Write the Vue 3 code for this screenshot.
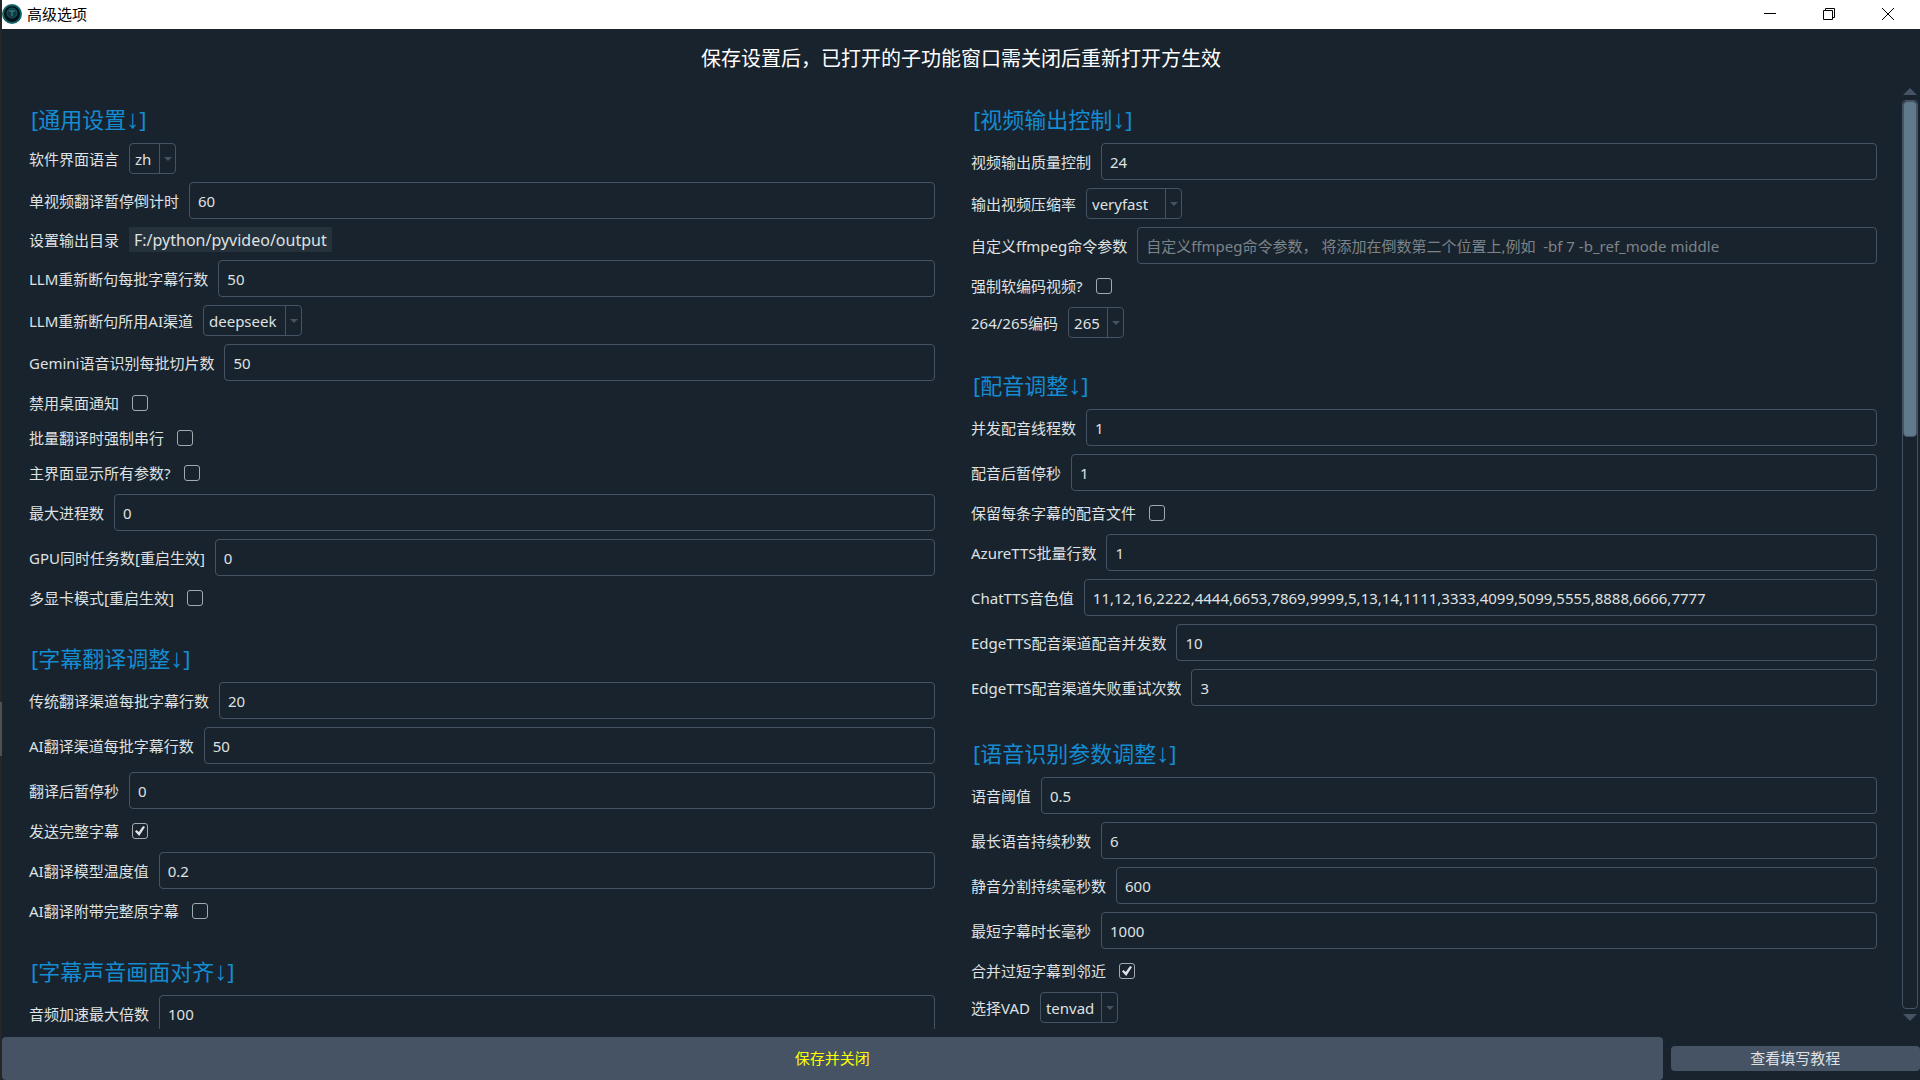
<!-- 高级选项 -->
<template>
  <div class="screen">
    <div class="edge"></div>
    <div class="window">
      <header class="title-bar">
        <svg class="logo" width="20" height="20" viewBox="0 0 20 20">
          <circle cx="10" cy="10" r="9" fill="#04141a" stroke="#14666c" stroke-width="2" />
          <circle cx="10" cy="9" r="5" fill="#0d3b43" stroke="#1d5a62" />
          <path d="M7 7h6M10 7v5" stroke="#4b8d92" fill="none" />
        </svg>
        <h1 class="title">高级选项</h1>
        <div class="win-btns">
          <button type="button" class="win-btn" aria-label="最小化">
            <svg width="12" height="12" viewBox="0 0 12 12"><path d="M0 5.5h12" /></svg>
          </button>
          <button type="button" class="win-btn" aria-label="还原">
            <svg width="12" height="12" viewBox="0 0 12 12">
              <path d="M.5 2.5h9v9h-9zM2.5 2.5v-2h9v9h-2" />
            </svg>
          </button>
          <button type="button" class="win-btn" aria-label="关闭">
            <svg width="12" height="12" viewBox="0 0 12 12"><path d="M0 0l12 12M12 0L0 12" /></svg>
          </button>
        </div>
      </header>

      <p class="tips">保存设置后，已打开的子功能窗口需关闭后重新打开方生效</p>

      <div class="body">
        <form class="columns" @submit.prevent>
          <div v-for="(groups, i) in columns" :key="i" class="column">
            <section v-for="group in groups" :key="group.title" class="group">
              <h2 class="group-title">[{{ group.title }}<span class="down">↓</span>]</h2>
              <div v-for="item in group.items" :key="item.key" class="row">
                <label class="label" :for="item.key">{{ item.label }}</label>
                <input
                  v-if="item.type === 'check'"
                  :id="item.key"
                  v-model="item.value"
                  type="checkbox"
                  class="check"
                />
                <span v-else-if="item.type === 'select'" class="select-box">
                  <select
                    :id="item.key"
                    v-model="item.value"
                    class="select"
                    :style="{ width: item.width + 'px' }"
                  >
                    <option v-for="opt in item.options" :key="opt" :value="opt">{{ opt }}</option>
                  </select>
                  <span class="select-arrow">
                    <svg width="8" height="4" viewBox="0 0 8 4"><path d="M0 0h8L4 4z" /></svg>
                  </span>
                </span>
                <button v-else-if="item.type === 'dir'" :id="item.key" type="button" class="dir-btn">
                  {{ item.value }}
                </button>
                <input
                  v-else
                  :id="item.key"
                  v-model="item.value"
                  type="text"
                  class="text"
                  :placeholder="item.placeholder"
                />
              </div>
            </section>
          </div>
        </form>

        <div class="scrollbar">
          <svg width="14" height="7" viewBox="0 0 14 7"><path d="M7 0l7 7H0z" /></svg>
          <div class="track"><div class="thumb"></div></div>
          <svg width="14" height="7" viewBox="0 0 14 7"><path d="M0 0h14L7 7z" /></svg>
        </div>
      </div>

      <footer class="footer">
        <button type="button" class="save-btn">保存并关闭</button>
        <button type="button" class="help-btn">查看填写教程</button>
      </footer>
    </div>
  </div>
</template>

<script setup>
import { reactive } from 'vue'

// 左右两列的设置项
const columns = reactive([
  [
    {
      title: '通用设置',
      items: [
        { key: 'lang', label: '软件界面语言', type: 'select', value: 'zh', options: ['zh', 'en'], width: 47 },
        { key: 'countdown_sec', label: '单视频翻译暂停倒计时', value: '60' },
        { key: 'homedir', label: '设置输出目录', type: 'dir', value: 'F:/python/pyvideo/output' },
        { key: 'llm_chunk_size', label: 'LLM重新断句每批字幕行数', value: '50' },
        {
          key: 'llm_ai_type',
          label: 'LLM重新断句所用AI渠道',
          type: 'select',
          value: 'deepseek',
          options: ['openai', 'deepseek'],
          width: 99,
        },
        { key: 'gemini_recogn_chunk', label: 'Gemini语音识别每批切片数', value: '50' },
        { key: 'dont_notify', label: '禁用桌面通知', type: 'check', value: false },
        { key: 'batch_single', label: '批量翻译时强制串行', type: 'check', value: false },
        { key: 'show_more', label: '主界面显示所有参数?', type: 'check', value: false },
        { key: 'process_max', label: '最大进程数', value: '0' },
        { key: 'process_max_gpu', label: 'GPU同时任务数[重启生效]', value: '0' },
        { key: 'multi_gpus', label: '多显卡模式[重启生效]', type: 'check', value: false },
      ],
    },
    {
      title: '字幕翻译调整',
      items: [
        { key: 'trans_thread', label: '传统翻译渠道每批字幕行数', value: '20' },
        { key: 'aitrans_thread', label: 'AI翻译渠道每批字幕行数', value: '50' },
        { key: 'translation_wait', label: '翻译后暂停秒', value: '0' },
        { key: 'aisendsrt', label: '发送完整字幕', type: 'check', value: true },
        { key: 'aitrans_temperature', label: 'AI翻译模型温度值', value: '0.2' },
        { key: 'aitrans_context', label: 'AI翻译附带完整原字幕', type: 'check', value: false },
      ],
    },
    {
      title: '字幕声音画面对齐',
      items: [{ key: 'max_audio_speed_rate', label: '音频加速最大倍数', value: '100' }],
    },
  ],
  [
    {
      title: '视频输出控制',
      items: [
        { key: 'crf', label: '视频输出质量控制', value: '24' },
        {
          key: 'preset',
          label: '输出视频压缩率',
          type: 'select',
          value: 'veryfast',
          options: ['ultrafast', 'veryfast', 'medium', 'slow'],
          width: 96,
        },
        {
          key: 'ffmpeg_cmd',
          label: '自定义ffmpeg命令参数',
          value: '',
          placeholder: '自定义ffmpeg命令参数， 将添加在倒数第二个位置上,例如  -bf 7 -b_ref_mode middle',
        },
        { key: 'force_lib', label: '强制软编码视频?', type: 'check', value: false },
        {
          key: 'video_codec',
          label: '264/265编码',
          type: 'select',
          value: '265',
          options: ['264', '265'],
          width: 56,
        },
      ],
    },
    {
      title: '配音调整',
      items: [
        { key: 'dubbing_thread', label: '并发配音线程数', value: '1' },
        { key: 'dubbing_wait', label: '配音后暂停秒', value: '1' },
        { key: 'save_segment_audio', label: '保留每条字幕的配音文件', type: 'check', value: false },
        { key: 'azure_lines', label: 'AzureTTS批量行数', value: '1' },
        {
          key: 'chattts_voice',
          label: 'ChatTTS音色值',
          value: '11,12,16,2222,4444,6653,7869,9999,5,13,14,1111,3333,4099,5099,5555,8888,6666,7777',
        },
        { key: 'edgetts_max_concurrent', label: 'EdgeTTS配音渠道配音并发数', value: '10' },
        { key: 'edgetts_retry_nums', label: 'EdgeTTS配音渠道失败重试次数', value: '3' },
      ],
    },
    {
      title: '语音识别参数调整',
      items: [
        { key: 'threshold', label: '语音阈值', value: '0.5' },
        { key: 'max_speech_duration_s', label: '最长语音持续秒数', value: '6' },
        { key: 'min_silence_duration_ms', label: '静音分割持续毫秒数', value: '600' },
        { key: 'min_speech_duration_ms', label: '最短字幕时长毫秒', value: '1000' },
        { key: 'merge_short_sub', label: '合并过短字幕到邻近', type: 'check', value: true },
        {
          key: 'vad_type',
          label: '选择VAD',
          type: 'select',
          value: 'tenvad',
          options: ['tenvad', 'silero'],
          width: 78,
        },
      ],
    },
  ],
])
</script>

<style>
body {
  background: #19232d;
}
</style>

<style scoped>
.screen {
  display: flex;
  height: 100vh;
  background: #19232d;
  color: #dfe1e2;
  font-family: 'Noto Sans', 'Noto Sans CJK SC', sans-serif;
  font-size: 15px;
  line-height: 20px;
}

button,
input,
select {
  box-sizing: border-box;
  margin: 0;
  font: inherit;
  color: inherit;
}

/* 窗口左侧露出的桌面 */
.edge {
  width: 2px;
  background: linear-gradient(#262626 65%, #505050 65%, #505050 70%, #262626 70%);
}

.window {
  flex: 1;
  min-width: 0;
  display: flex;
  flex-direction: column;
}

.title-bar {
  box-sizing: border-box;
  display: flex;
  align-items: center;
  height: 29px;
  padding-bottom: 1px;
  background: #fff;
  color: #000;
}

.title {
  flex: 1;
  margin: 0 0 0 5px;
  font-size: 15px;
  font-weight: 400;
}

.win-btns {
  display: flex;
  align-self: stretch;
  padding-right: 3px;
}

.win-btn {
  display: flex;
  align-items: center;
  justify-content: center;
  width: 59px;
  padding: 0;
  border: none;
  background: none;
}

.win-btn path {
  fill: none;
  stroke: #000;
}

.tips {
  margin: 0;
  font-size: 20px;
  line-height: 59px;
  text-align: center;
  color: #fff;
}

.body {
  flex: 1;
  min-height: 0;
  display: flex;
  padding-bottom: 8px;
}

.columns {
  flex: 1;
  display: grid;
  grid-template-columns: 1fr 1fr;
  align-items: start;
  gap: 36px;
  padding: 16px 25px 0 27px;
  overflow-y: auto;
  scrollbar-width: none;
}

.column {
  display: flex;
  flex-direction: column;
  gap: 32px;
  min-width: 0;
}

.group {
  display: flex;
  flex-direction: column;
  gap: 8px;
}

.group-title {
  margin: 0;
  padding-left: 2px;
  font-size: 22px;
  font-weight: 400;
  line-height: 31px;
  color: #148cd2;
}

.down {
  font-family: 'Liberation Sans', sans-serif;
  font-size: 26px;
  line-height: 1px;
}

.row {
  display: flex;
  align-items: center;
  gap: 10px;
  min-height: 25px;
}

.label {
  white-space: nowrap;
}

.text {
  flex: 1;
  min-width: 0;
  height: 37px;
  padding: 0 8px;
  border: 1px solid #455364;
  border-radius: 4px;
  background: transparent;
  outline: none;
}

.text::placeholder {
  color: #7c8389;
  opacity: 1;
}

.check {
  appearance: none;
  display: grid;
  place-content: center;
  width: 16px;
  height: 16px;
  margin: 6px 3px 5px;
  border: 1px solid #a4a9ad;
  border-radius: 3px;
}

.check:checked::before {
  content: '';
  width: 10px;
  height: 10px;
  background: #dfe1e2;
  clip-path: polygon(0 55%, 15% 40%, 38% 60%, 80% 0, 100% 10%, 42% 100%);
}

.select-box {
  display: grid;
}

.select {
  grid-area: 1 / 1;
  appearance: none;
  height: 31px;
  padding: 0 17px 0 5px;
  border: 1px solid #455364;
  border-radius: 4px;
  background: transparent;
}

.select option {
  background: #19232d;
}

.select-arrow {
  grid-area: 1 / 1;
  justify-self: end;
  display: flex;
  align-items: center;
  justify-content: center;
  width: 16px;
  border-left: 1px solid #455364;
  pointer-events: none;
}

.select-arrow path,
.scrollbar path {
  fill: #455364;
}

.dir-btn {
  height: 25px;
  padding: 0 5px;
  border: none;
  background: #25323b;
  font-size: 16px;
}

.scrollbar {
  display: flex;
  flex-direction: column;
  align-items: center;
  gap: 5px;
  width: 16px;
  padding-bottom: 8px;
  margin-right: 2px;
}

.track {
  flex: 1;
  box-sizing: border-box;
  width: 16px;
  border: 1px solid #455364;
  border-radius: 4px;
}

.thumb {
  box-sizing: border-box;
  height: 37%;
  border: 1px solid #455364;
  border-radius: 4px;
  background: #60798b;
}

.footer {
  display: flex;
  align-items: center;
  gap: 8px;
}

.save-btn,
.help-btn {
  padding: 0 0 2px;
  border: none;
  border-radius: 4px;
  background: #455364;
}

.save-btn {
  flex: 1;
  height: 43px;
  color: #ff0;
}

.help-btn {
  flex: 0 0 13%;
  height: 25px;
}
</style>
